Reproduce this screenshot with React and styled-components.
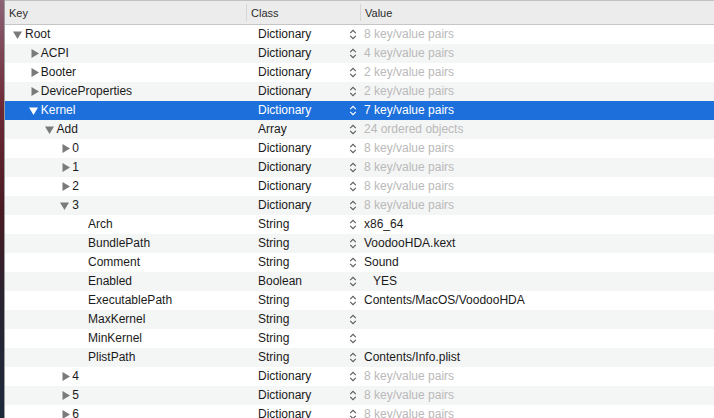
import React from 'react';
import styled, { createGlobalStyle } from 'styled-components';

const GlobalStyle = createGlobalStyle`
  html, body {
    margin: 0;
    padding: 0;
    background: #fff;
  }
  body {
    font-family: "Liberation Sans", Arial, sans-serif;
    -webkit-font-smoothing: antialiased;
  }
`;

const Screen = styled.div`
  display: flex;
  width: 714px;
  height: 418px;
  overflow: hidden;
`;

const Wallpaper = styled.div`
  width: 4px;
  flex: none;
  background: linear-gradient(180deg, #8c6275 0%, #6e2a36 25%, #4a1a22 50%, #2a2330 70%, #1c2a3c 100%);
`;

const Table = styled.div`
  flex: 1;
  display: flex;
  flex-direction: column;
  border-left: 1px solid #9c9c9c;
  background: #fff;
`;

const Header = styled.div`
  flex: none;
  display: grid;
  grid-template-columns: 241px 114px 1fr;
  height: 23px;
  border-top: 1px solid #c2c2c2;
  border-bottom: 1px solid #c6c6c6;
  background: #ececec;
  font-size: 11px;
  color: #2b2b2b;
`;

const HeadCell = styled.div`
  display: flex;
  align-items: center;
  padding-left: ${p => p.pad}px;
  border-left: ${p => (p.divider ? '1px solid #d6d6d6' : 'none')};
  margin: ${p => (p.divider ? '3px 0' : '0')};
`;

const Row = styled.div`
  flex: none;
  display: grid;
  grid-template-columns: 241px 114px 1fr;
  height: 19px;
  line-height: 19px;
  font-size: 12px;
  background: ${p => (p.selected ? '#1d6fdc' : p.striped ? '#f4f5f5' : '#fff')};
  color: ${p => (p.selected ? '#fff' : '#1a1a1a')};
`;

const KeyCell = styled.div`
  display: flex;
  align-items: center;
  padding-left: ${p => 8 + p.depth * 15.75}px;
  white-space: nowrap;
`;

const Disclosure = styled.span`
  display: inline-flex;
  align-items: center;
  justify-content: ${p => (p.open ? 'flex-start' : 'center')};
  width: 12px;
  height: 19px;
  flex: none;
`;

const ClassCell = styled.div`
  display: flex;
  align-items: center;
  justify-content: space-between;
  padding-left: 12px;
  padding-right: 3px;
`;

const ValueCell = styled.div`
  padding-left: ${p => (p.boolean ? 13 : 4)}px;
  white-space: nowrap;
  color: ${p => (p.selected ? '#fff' : p.muted ? '#b9b9b9' : '#1a1a1a')};
`;

const Triangle = ({ open, color }) =>
  open ? (
    <svg width="9" height="8" viewBox="0 0 9 8">
      <polygon points="0,0.5 9,0.5 4.5,8" fill={color} />
    </svg>
  ) : (
    <svg width="8" height="9" viewBox="0 0 8 9">
      <polygon points="0.5,0 8,4.5 0.5,9" fill={color} />
    </svg>
  );

const Stepper = ({ color }) => (
  <svg width="8" height="11" viewBox="0 0 8 11">
    <path d="M1.2 4.2 L4 1.4 L6.8 4.2" fill="none" stroke={color} strokeWidth="1.1" />
    <path d="M1.2 6.8 L4 9.6 L6.8 6.8" fill="none" stroke={color} strokeWidth="1.1" />
  </svg>
);

const rows = [
  { key: 'Root', depth: 0, open: true, cls: 'Dictionary', value: '8 key/value pairs', muted: true },
  { key: 'ACPI', depth: 1, open: false, cls: 'Dictionary', value: '4 key/value pairs', muted: true },
  { key: 'Booter', depth: 1, open: false, cls: 'Dictionary', value: '2 key/value pairs', muted: true },
  { key: 'DeviceProperties', depth: 1, open: false, cls: 'Dictionary', value: '2 key/value pairs', muted: true },
  { key: 'Kernel', depth: 1, open: true, cls: 'Dictionary', value: '7 key/value pairs', selected: true },
  { key: 'Add', depth: 2, open: true, cls: 'Array', value: '24 ordered objects', muted: true },
  { key: '0', depth: 3, open: false, cls: 'Dictionary', value: '8 key/value pairs', muted: true },
  { key: '1', depth: 3, open: false, cls: 'Dictionary', value: '8 key/value pairs', muted: true },
  { key: '2', depth: 3, open: false, cls: 'Dictionary', value: '8 key/value pairs', muted: true },
  { key: '3', depth: 3, open: true, cls: 'Dictionary', value: '8 key/value pairs', muted: true },
  { key: 'Arch', depth: 4, leaf: true, cls: 'String', value: 'x86_64' },
  { key: 'BundlePath', depth: 4, leaf: true, cls: 'String', value: 'VoodooHDA.kext' },
  { key: 'Comment', depth: 4, leaf: true, cls: 'String', value: 'Sound' },
  { key: 'Enabled', depth: 4, leaf: true, cls: 'Boolean', value: 'YES', boolean: true },
  { key: 'ExecutablePath', depth: 4, leaf: true, cls: 'String', value: 'Contents/MacOS/VoodooHDA' },
  { key: 'MaxKernel', depth: 4, leaf: true, cls: 'String', value: '' },
  { key: 'MinKernel', depth: 4, leaf: true, cls: 'String', value: '' },
  { key: 'PlistPath', depth: 4, leaf: true, cls: 'String', value: 'Contents/Info.plist' },
  { key: '4', depth: 3, open: false, cls: 'Dictionary', value: '8 key/value pairs', muted: true },
  { key: '5', depth: 3, open: false, cls: 'Dictionary', value: '8 key/value pairs', muted: true },
  { key: '6', depth: 3, open: false, cls: 'Dictionary', value: '8 key/value pairs', muted: true },
];

export default function App() {
  return (
    <Screen>
      <GlobalStyle />
      <Wallpaper />
      <Table>
        <Header>
          <HeadCell pad={4}>Key</HeadCell>
          <HeadCell pad={4} divider>Class</HeadCell>
          <HeadCell pad={4} divider>Value</HeadCell>
        </Header>
        {rows.map((r, i) => {
          const fg = r.selected ? '#fff' : '#7a7a7a';
          return (
            <Row key={i} striped={i % 2 === 1} selected={r.selected}>
              <KeyCell depth={r.depth}>
                <Disclosure open={r.open}>
                  {!r.leaf && <Triangle open={r.open} color={fg} />}
                </Disclosure>
                {r.key}
              </KeyCell>
              <ClassCell>
                {r.cls}
                <Stepper color={r.selected ? '#fff' : '#5a5a5a'} />
              </ClassCell>
              <ValueCell muted={r.muted} selected={r.selected} boolean={r.boolean}>
                {r.value}
              </ValueCell>
            </Row>
          );
        })}
      </Table>
    </Screen>
  );
}
